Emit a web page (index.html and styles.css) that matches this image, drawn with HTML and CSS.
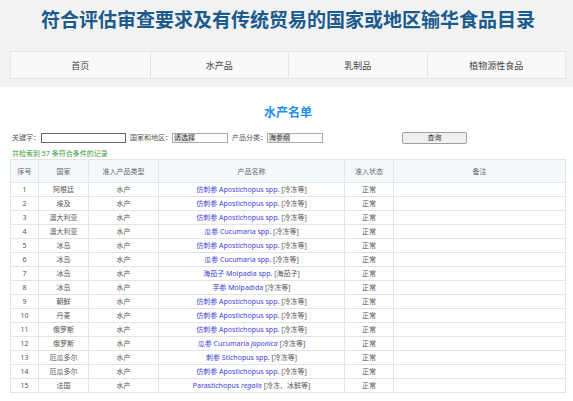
FILE: index.html
```html
<!DOCTYPE html>
<html lang="zh">
<head>
<meta charset="utf-8">
<title>水产名单</title>
<link rel="stylesheet" href="styles.css">
</head>
<body>
<header class="top">
  <h1 class="title">符合评估审查要求及有传统贸易的国家或地区输华食品目录</h1>
  <nav class="nav">
    <a class="nav-item">首页</a>
    <a class="nav-item">水产品</a>
    <a class="nav-item">乳制品</a>
    <a class="nav-item">植物源性食品</a>
  </nav>
</header>
<main class="main">
  <h2 class="list-title">水产名单</h2>
  <div class="search">
    <span class="label">关键字：</span>
    <div class="field field-key"></div>
    <span class="label">国家和地区：</span>
    <div class="field field-sel"><span class="val">请选择</span></div>
    <span class="label">产品分类：</span>
    <div class="field field-sel field-cat"><span class="val">海参纲</span></div>
    <div class="btn">查询</div>
  </div>
  <p class="count">共检索到 57 条符合条件的记录</p>
  <table class="grid">
    <colgroup>
      <col class="c1"><col class="c2"><col class="c3"><col class="c4"><col class="c5"><col class="c6">
    </colgroup>
    <thead>
      <tr><th>序号</th><th>国家</th><th>准入产品类型</th><th>产品名称</th><th>准入状态</th><th>备注</th></tr>
    </thead>
    <tbody>
      <tr><td>1</td><td>阿根廷</td><td>水产</td><td><a class="prod">仿刺参 Apostichopus spp.</a> <span class="note">[冷冻等]</span></td><td>正常</td><td></td></tr>
      <tr><td>2</td><td>埃及</td><td>水产</td><td><a class="prod">仿刺参 Apostichopus spp.</a> <span class="note">[冷冻等]</span></td><td>正常</td><td></td></tr>
      <tr><td>3</td><td>澳大利亚</td><td>水产</td><td><a class="prod">仿刺参 Apostichopus spp.</a> <span class="note">[冷冻等]</span></td><td>正常</td><td></td></tr>
      <tr><td>4</td><td>澳大利亚</td><td>水产</td><td><a class="prod">瓜参 Cucumaria spp.</a> <span class="note">[冷冻等]</span></td><td>正常</td><td></td></tr>
      <tr><td>5</td><td>冰岛</td><td>水产</td><td><a class="prod">仿刺参 Apostichopus spp.</a> <span class="note">[冷冻等]</span></td><td>正常</td><td></td></tr>
      <tr><td>6</td><td>冰岛</td><td>水产</td><td><a class="prod">瓜参 Cucumaria spp.</a> <span class="note">[冷冻等]</span></td><td>正常</td><td></td></tr>
      <tr><td>7</td><td>冰岛</td><td>水产</td><td><a class="prod">海茄子 Molpadia spp.</a> <span class="note">[海茄子]</span></td><td>正常</td><td></td></tr>
      <tr><td>8</td><td>冰岛</td><td>水产</td><td><a class="prod">芋参 Molpadida</a> <span class="note">[冷冻等]</span></td><td>正常</td><td></td></tr>
      <tr><td>9</td><td>朝鲜</td><td>水产</td><td><a class="prod">仿刺参 Apostichopus spp.</a> <span class="note">[冷冻等]</span></td><td>正常</td><td></td></tr>
      <tr><td>10</td><td>丹麦</td><td>水产</td><td><a class="prod">仿刺参 Apostichopus spp.</a> <span class="note">[冷冻等]</span></td><td>正常</td><td></td></tr>
      <tr><td>11</td><td>俄罗斯</td><td>水产</td><td><a class="prod">仿刺参 Apostichopus spp.</a> <span class="note">[冷冻等]</span></td><td>正常</td><td></td></tr>
      <tr><td>12</td><td>俄罗斯</td><td>水产</td><td><a class="prod">瓜参 Cucumaria <i>japonica</i></a> <span class="note">[冷冻等]</span></td><td>正常</td><td></td></tr>
      <tr><td>13</td><td>厄瓜多尔</td><td>水产</td><td><a class="prod">刺参 Stichopus spp.</a> <span class="note">[冷冻等]</span></td><td>正常</td><td></td></tr>
      <tr><td>14</td><td>厄瓜多尔</td><td>水产</td><td><a class="prod">仿刺参 Apostichopus spp.</a> <span class="note">[冷冻等]</span></td><td>正常</td><td></td></tr>
      <tr><td>15</td><td>法国</td><td>水产</td><td><a class="prod">Parastichopus <i>regalis</i></a> <span class="note">[冷冻、冰鲜等]</span></td><td>正常</td><td></td></tr>
    </tbody>
  </table>
</main>
</body>
</html>
```

FILE: styles.css
```css
html, body {
  margin: 0;
  padding: 0;
  background: #ffffff;
  font-family: "Noto Sans", "Noto Sans CJK SC", sans-serif;
  color: #555;
}

.top {
  background: #f2f2f2;
  padding: 7px 7px 8px 10px;
}

.title {
  margin: 0;
  text-align: center;
  font-family: "Noto Sans CJK SC", sans-serif;
  font-size: 19px;
  line-height: 24px;
  font-weight: 700;
  color: #1b5a8d;
}

.nav {
  margin-top: 20px;
  display: grid;
  grid-template-columns: repeat(4, 1fr);
  height: 28px;
  background: #f9f9f9;
  border: 1px solid #e4e4e4;
  box-sizing: border-box;
}

.nav-item {
  display: flex;
  align-items: center;
  justify-content: center;
  font-size: 9px;
  color: #444;
  border-left: 1px solid #e4e4e4;
}

.nav-item:first-child {
  border-left: none;
}

.main {
  padding: 0 7px 0 10px;
}

.list-title {
  margin: 17px 0 0;
  text-align: center;
  font-family: "Noto Sans CJK SC", sans-serif;
  font-size: 12px;
  line-height: 16px;
  font-weight: 700;
  color: #1e8ee8;
}

.search {
  display: flex;
  align-items: center;
  height: 12px;
  margin-top: 12px;
  padding-left: 2px;
}

.label {
  font-size: 7px;
  line-height: 12px;
  color: #555;
}

.field {
  height: 10px;
  box-sizing: border-box;
  background: #fff;
  display: flex;
  align-items: center;
  padding-left: 1px;
}

.field-key {
  width: 85px;
  border: 1px solid #666;
  margin: 0 4px 0 1px;
}

.field-sel {
  width: 56px;
  border: 1px solid #aaa;
  margin: 0 4px 0 0;
}

.field-cat {
  margin-right: 79px;
}

.val {
  font-size: 7px;
  line-height: 8px;
  background: #e6e6e6;
  color: #333;
}

.btn {
  width: 65px;
  height: 12px;
  box-sizing: border-box;
  border: 1px solid #a0a0a0;
  border-radius: 2px;
  background: #efefef;
  font-size: 7px;
  line-height: 10px;
  text-align: center;
  color: #333;
}

.count {
  margin: 5px 0 0 2px;
  font-size: 7px;
  line-height: 10px;
  color: #3b9b3b;
}

.grid {
  margin-top: 0;
  width: 100%;
  border-collapse: collapse;
  table-layout: fixed;
  font-size: 7px;
  color: #555;
}

.c1 { width: 28px; }
.c2 { width: 50px; }
.c3 { width: 70px; }
.c4 { width: 186px; }
.c5 { width: 49px; }

.grid th,
.grid td {
  border: 1px solid #e4e4e4;
  text-align: center;
  padding: 0;
  white-space: nowrap;
  overflow: hidden;
}

.grid th {
  height: 22px;
  background: #f6f9fc;
  font-weight: 400;
  color: #666;
}

.grid td {
  height: 13px;
  line-height: 12px;
}

.prod {
  color: #3d3ddb;
}

.note {
  color: #555;
}
```
